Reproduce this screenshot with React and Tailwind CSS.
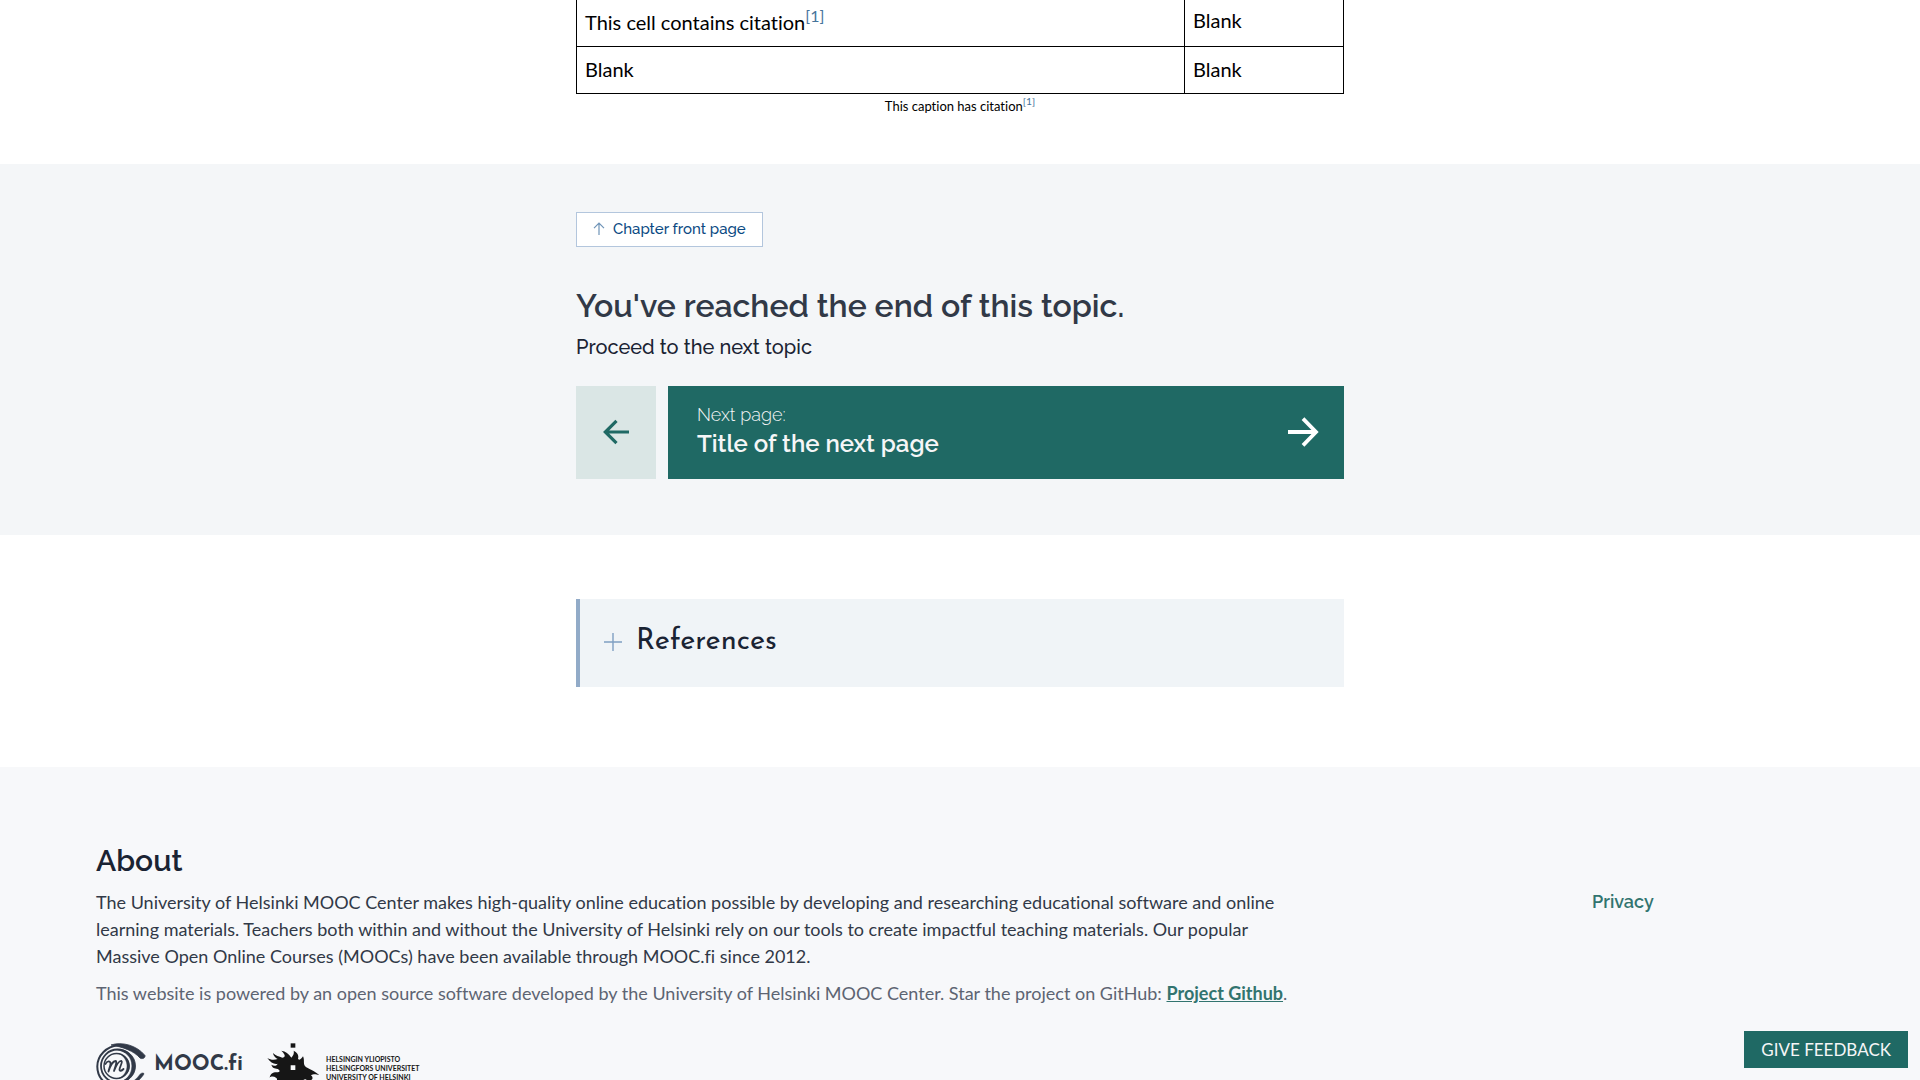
function Citation() {
  return (
    <sup className="text-[80%]">
      <a href="#references" className="text-[#46749b]">[1]</a>
    </sup>
  );
}

function CitationTable() {
  return (
    <table className="w-full border-collapse text-xl leading-6 text-black">
      <caption className="caption-bottom pt-0.5 text-[13px] leading-5 text-black">
        This caption has citation<Citation />
      </caption>
      <tbody>
        <tr className="h-[46px]">
          <td className="w-[608px] border border-t-0 border-black px-2 pb-0.5">
            This cell contains citation<Citation />
          </td>
          <td className="border border-t-0 border-black px-2 pb-1.5">Blank</td>
        </tr>
        <tr className="h-[47px]">
          <td className="border border-black px-2 pb-0.5">Blank</td>
          <td className="border border-black px-2 pb-0.5">Blank</td>
        </tr>
      </tbody>
    </table>
  );
}

function EndOfTopic() {
  return (
    <section className="bg-[#f4f6f8] pt-12 pb-14 font-[Raleway,sans-serif]">
      <div className="mx-auto max-w-3xl">
        <a href="#chapter" className="inline-flex h-[35px] items-center border border-[#b3c6dd] bg-white px-4 text-[15px] font-medium text-[#0b4a83]">
          <svg viewBox="0 0 12 14" className="mr-2 h-3.5 w-3" fill="none" stroke="#6f94b8" strokeWidth="1.2">
            <path d="M6 13V1.5M1 6.2L6 1.2L11 6.2" />
          </svg>
          Chapter front page
        </a>
        <h2 className="mt-[37px] text-[32px] leading-11 font-semibold text-[#313947]">You've reached the end of this topic.</h2>
        <p className="mt-1 text-xl leading-[31px] font-medium text-[#1a2333]">Proceed to the next topic</p>
        <nav className="mt-[23px] flex h-[93px] gap-3">
          <a href="#previous" aria-label="Previous page" className="flex w-20 items-center justify-center bg-[#dae6e5]">
            <svg viewBox="0 0 28 28" className="h-7 w-7" fill="none" stroke="#1f6964" strokeWidth="3.2">
              <path d="M27 14H3M14.5 2.8L3.3 14L14.5 25.2" />
            </svg>
          </a>
          <a href="#next" className="flex flex-1 items-center justify-between bg-[#1f6964] pr-[25px] pl-[29px] text-[#f5f6f7]">
            <span className="flex flex-col pb-1">
              <span className="text-lg leading-7 font-light">Next page:</span>
              <span className="text-2xl leading-[30px] font-semibold">Title of the next page</span>
            </span>
            <svg viewBox="0 0 32 32" className="h-8 w-8" fill="none" stroke="white" strokeWidth="3.8">
              <path d="M1 16H28M16 2.7L29 16L16 29.3" />
            </svg>
          </a>
        </nav>
      </div>
    </section>
  );
}

function References() {
  return (
    <section id="references" className="mx-auto mt-16 mb-20 w-full max-w-3xl border-l-4 border-[#92abc8] bg-[#f0f4f7]">
      <button type="button" aria-expanded="false" className="flex h-[88px] w-full items-center gap-3.5 px-6 pb-0.5 font-['Josefin_Sans',sans-serif] text-[29px] font-normal text-[#1a2333]">
        <svg viewBox="0 0 18 18" className="h-[18px] w-[18px]" fill="none" stroke="#7f9fc2" strokeWidth="1.4">
          <path d="M9 0V18M0 9H18" />
        </svg>
        <span>References</span>
      </button>
    </section>
  );
}

function MoocLogo() {
  return (
    <a href="#mooc" className="flex items-start gap-2 text-[#313947]">
      <svg viewBox="0 0 50 46" className="h-[46px] w-[50px]" fill="none" stroke="currentColor">
        <path d="M43 9.5C36 4 30 1.5 22 2.3C11 3.4 1.3 12 1.3 23.5C1.3 35 10 44 22 44" strokeWidth="2" />
        <path d="M15 2C26 -1.8 41 2.5 49 12.5C49.5 15 46 16.5 44 15C38 8 27 4 15 2Z" fill="currentColor" strokeWidth=".8" />
        <path d="M48 31C44 38 35 44 24 44.8L24 43C33 42 39 38 43.5 32C44.5 30 48 29 48 31Z" fill="currentColor" strokeWidth=".5" />
        <circle cx="21.5" cy="23" r="16.5" strokeWidth="1.8" />
        <path d="M20 6.5C31 5.5 39.5 13 39.5 23C39.5 33 31 40 21 40C30 38 36 32 36 23C36 14 30 8 20 6.5Z" fill="currentColor" strokeWidth=".8" />
        <circle cx="20.5" cy="23" r="12.5" strokeWidth="1.5" />
        <path d="M23 10.5C29 12 33.5 17 33.5 23C33.5 29 29 34 23 35.5C28 33 31 28 31 23C31 18 28 13 23 10.5Z" fill="currentColor" strokeWidth=".4" />
        <path d="M9.5 21C11 17.5 14.5 17.5 14.5 20.5C14.5 23 13 25.5 12.5 28.5C14 23.5 17 18 19.5 18C21.5 18 19 24.5 18 28C20 23 23 17.5 25.5 18C27 18.5 23.5 24.5 23.5 26.5C23.5 28.5 25.5 28 27.5 26" strokeWidth="1.8" strokeLinecap="round" strokeLinejoin="round" />
      </svg>
      <span className="mt-2 font-['Josefin_Sans',sans-serif] text-[21px] leading-7 font-bold">MOOC.fi</span>
    </a>
  );
}

function HelsinkiLogo() {
  return (
    <a href="#helsinki" className="flex items-start gap-1.5 text-[#161616]">
      <svg viewBox="21 21 159 138" className="h-[46px] w-[53px]" fill="currentColor">
        <path d="M92 22H106V35H92Z" />
        <path fillRule="evenodd" d="M22 66C31 72 43 73 53 69C46 65 40 60 39 51C47 60 57 61 67 65C77 64 77 56 64 44C77 46 86 53 94 65C99 60 103 54 101 44C113 50 117 58 114 68C118 75 124 69 129 61C134 71 130 79 133 87C138 98 155 98 178 117C167 115 162 113 153 118C165 128 151 139 136 130C124 130 128 147 112 156C118 142 107 137 98 143C90 149 82 140 70 139C58 138 50 144 40 138C52 135 54 128 48 125C42 121 33 120 29 125C31 111 42 107 54 109C61 108 60 102 53 99C43 97 37 96 34 86C43 92 51 89 53 83C44 86 31 80 22 66ZM92 88V102H106V88Z" />
      </svg>
      <span className="mt-3 font-[Lato,sans-serif] text-[7px] leading-[9px] font-bold">
        HELSINGIN YLIOPISTO
        <br />
        HELSINGFORS UNIVERSITET
        <br />
        UNIVERSITY OF HELSINKI
      </span>
    </a>
  );
}

function Footer() {
  return (
    <footer className="flex-1 bg-[#f7f8fa] px-24 pt-[74px]">
      <div className="flex justify-between">
        <div className="max-w-[1200px]">
          <h2 className="font-[Raleway,sans-serif] text-[30px] leading-10 font-semibold text-[#1a2333]">About</h2>
          <p className="mt-2 text-lg leading-[27px] text-[#313947]">
            The University of Helsinki MOOC Center makes high-quality online education possible by developing and researching educational software and online learning materials. Teachers both within and without the University of Helsinki rely on our tools to create impactful teaching materials. Our popular Massive Open Online Courses (MOOCs) have been available through MOOC.fi since 2012.
          </p>
          <p className="mt-2.5 text-lg leading-[27px] text-[#5d6472]">
            This website is powered by an open source software developed by the University of Helsinki MOOC Center. Star the project on GitHub:{" "}
            <a href="#github" className="font-bold text-[#32746f] underline">Project Github</a>.
          </p>
        </div>
        <nav className="w-[232px] pt-[47px]">
          <a href="#privacy" className="font-[Raleway,sans-serif] text-lg leading-[27px] font-semibold text-[#32746f]">Privacy</a>
        </nav>
      </div>
      <div className="mt-9 flex gap-6">
        <MoocLogo />
        <HelsinkiLogo />
      </div>
    </footer>
  );
}

export default function App() {
  return (
    <div className="flex h-screen flex-col overflow-hidden bg-white font-[Lato,'Open_Sans',sans-serif] [font-variant-ligatures:none]">
      <main>
        <div className="mx-auto mb-12 w-full max-w-3xl">
          <CitationTable />
        </div>
        <EndOfTopic />
        <References />
      </main>
      <Footer />
      <button type="button" className="fixed right-3 bottom-3 h-[37px] bg-[#1f6964] px-[17px] text-[17px] text-[#f5f6f7]">GIVE FEEDBACK</button>
    </div>
  );
}
